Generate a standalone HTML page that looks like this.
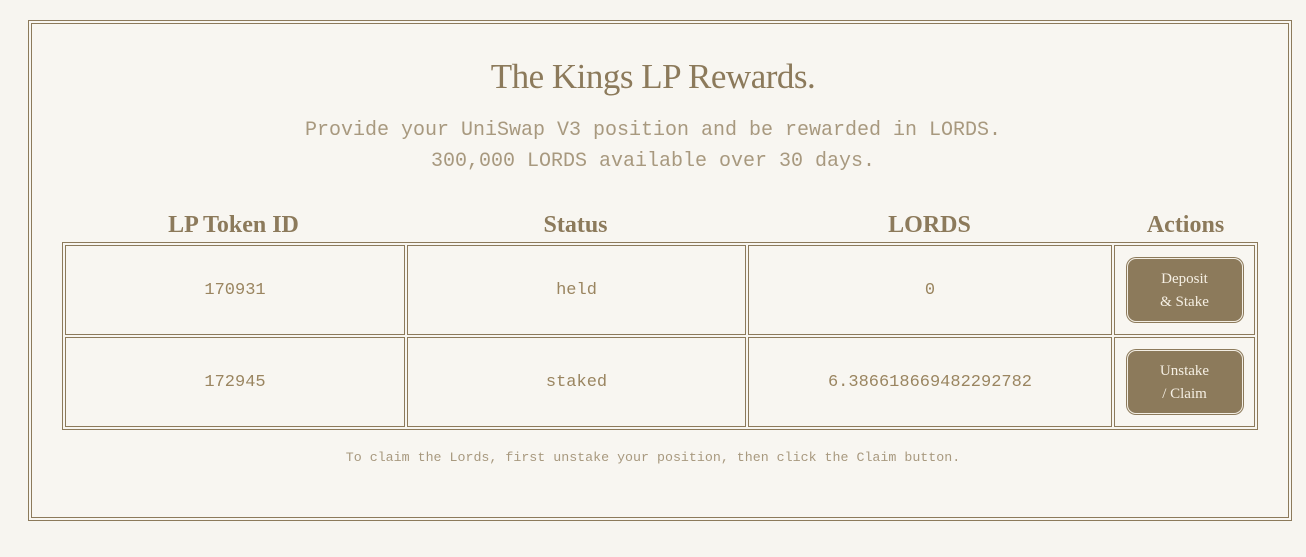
<!DOCTYPE html>
<html><head><style>
html,body{margin:0;padding:0;}
body{width:1306px;height:557px;background:#f7f5f0;position:relative;overflow:hidden;font-family:"Liberation Serif",serif;color:#8c7a5b;}
.box{position:absolute;left:28px;top:20px;width:1262px;height:499px;border:1px solid #8c7a5b;background:#f8f6f1;}
.box:after{content:"";position:absolute;left:2px;top:2px;right:2px;bottom:2px;border:1px solid #8c7a5b;}
h1{position:absolute;left:0;top:57px;width:1306px;margin:0;text-align:center;font-weight:normal;font-size:35px;letter-spacing:-0.5px;}
.sub{position:absolute;left:0;top:115px;width:1306px;text-align:center;font-family:"Liberation Mono",monospace;font-size:20px;line-height:31px;color:#a8997f;}
.hd{position:absolute;top:212px;font-weight:bold;font-size:24px;text-align:center;}
table{position:absolute;left:62px;top:242px;width:1196px;height:188px;border:1px solid #8c7a5b;border-spacing:2px;padding:0;table-layout:fixed;}
td{border:1px solid #8c7a5b;text-align:center;font-family:"Liberation Mono",monospace;font-size:17px;color:#9a8560;padding:0;height:88px;}
.btn{display:inline-block;width:116px;height:64px;background:#8c7a5b;border:1px solid #f3eee4;box-shadow:0 0 0 1px #8c7a5b;border-radius:9px;color:#f5efe3;font-family:"Liberation Serif",serif;font-size:15px;line-height:23px;box-sizing:border-box;padding-top:9px;}
.foot{position:absolute;left:0;top:450px;width:1306px;text-align:center;font-family:"Liberation Mono",monospace;font-size:13.3px;color:#a8997f;}
</style></head><body>
<div class="box"></div>
<h1>The Kings LP Rewards.</h1>
<div class="sub">Provide your UniSwap V3 position and be rewarded in LORDS.<br>300,000 LORDS available over 30 days.</div>
<div class="hd" style="left:62px;width:343px">LP Token ID</div>
<div class="hd" style="left:405px;width:341px">Status</div>
<div class="hd" style="left:746px;width:367px">LORDS</div>
<div class="hd" style="left:1113px;width:145px">Actions</div>
<table>
<colgroup><col style="width:340px"><col style="width:339px"><col style="width:364px"><col></colgroup>
<tr><td>170931</td><td>held</td><td>0</td><td><span class="btn">Deposit<br>&amp; Stake</span></td></tr>
<tr><td>172945</td><td>staked</td><td>6.386618669482292782</td><td><span class="btn">Unstake<br>/ Claim</span></td></tr>
</table>
<div class="foot">To claim the Lords, first unstake your position, then click the Claim button.</div>
</body></html>
